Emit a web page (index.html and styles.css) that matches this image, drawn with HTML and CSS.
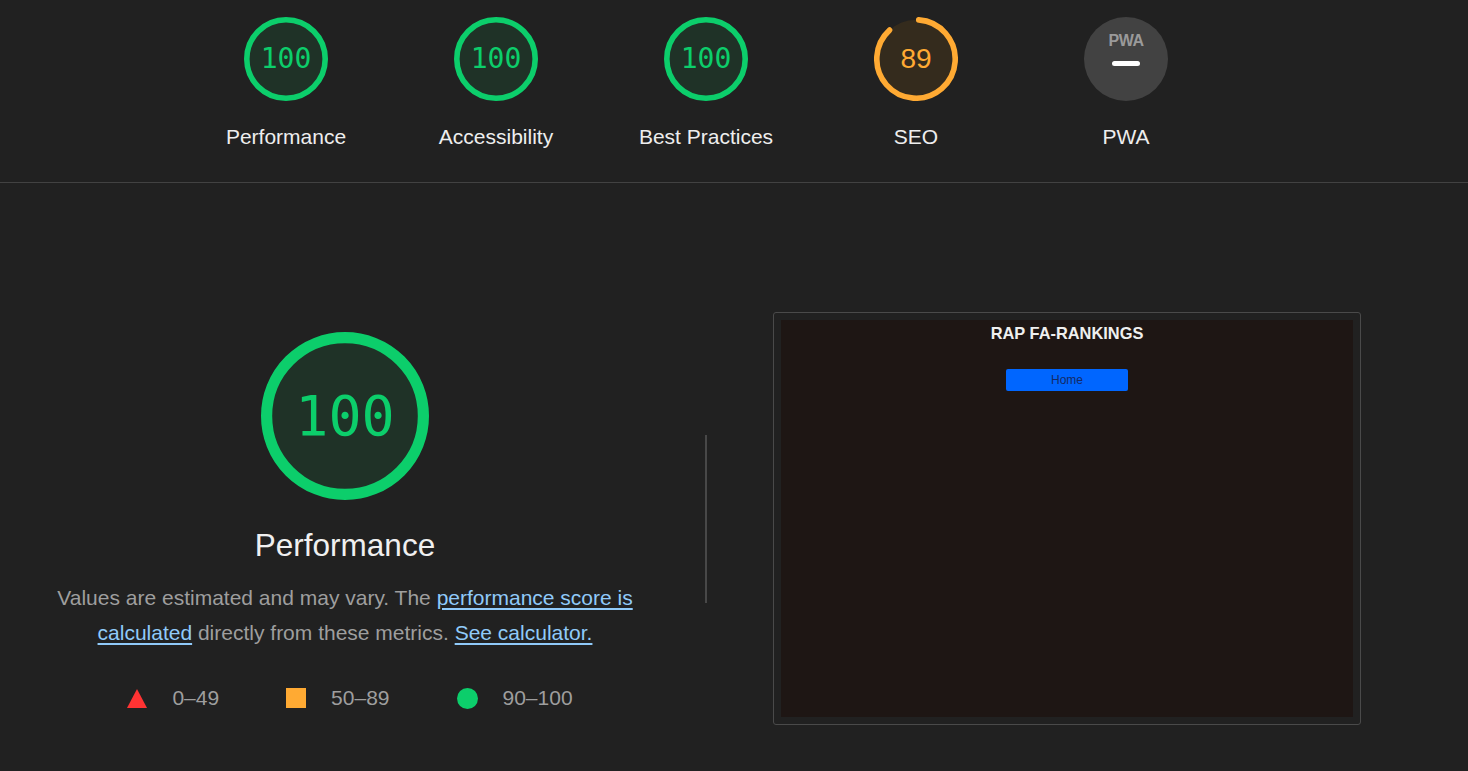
FILE: index.html
```html
<!DOCTYPE html>
<html lang="en">
<head>
<meta charset="utf-8">
<title>Lighthouse Report</title>
<link rel="stylesheet" href="styles.css">
</head>
<body>
<header class="scores-bar">
  <div class="scores">
    <div class="gauge-item">
      <div class="gauge small pass">
        <svg viewBox="0 0 120 120"><circle class="base" cx="60" cy="60" r="56"/><circle class="arc" cx="60" cy="60" r="56" stroke-dasharray="351.86 351.86" transform="rotate(-90 60 60)"/></svg>
        <span class="pct">100</span>
      </div>
      <div class="label">Performance</div>
    </div>
    <div class="gauge-item">
      <div class="gauge small pass">
        <svg viewBox="0 0 120 120"><circle class="base" cx="60" cy="60" r="56"/><circle class="arc" cx="60" cy="60" r="56" stroke-dasharray="351.86 351.86" transform="rotate(-90 60 60)"/></svg>
        <span class="pct">100</span>
      </div>
      <div class="label">Accessibility</div>
    </div>
    <div class="gauge-item">
      <div class="gauge small pass">
        <svg viewBox="0 0 120 120"><circle class="base" cx="60" cy="60" r="56"/><circle class="arc" cx="60" cy="60" r="56" stroke-dasharray="351.86 351.86" transform="rotate(-90 60 60)"/></svg>
        <span class="pct">100</span>
      </div>
      <div class="label">Best Practices</div>
    </div>
    <div class="gauge-item">
      <div class="gauge small average">
        <svg viewBox="0 0 120 120"><circle class="base" cx="60" cy="60" r="56"/><circle class="arc" cx="60" cy="60" r="56" stroke-dasharray="306 351.86" transform="rotate(-86 60 60)"/></svg>
        <span class="pct">89</span>
      </div>
      <div class="label">SEO</div>
    </div>
    <div class="gauge-item">
      <div class="gauge small pwa">
        <span class="pwa-logo">PWA</span>
        <span class="pwa-dash"></span>
      </div>
      <div class="label">PWA</div>
    </div>
  </div>
</header>

<section class="perf">
  <div class="perf-left">
    <div class="gauge big pass">
      <svg viewBox="0 0 120 120"><circle class="base" cx="60" cy="60" r="56"/><circle class="arc" cx="60" cy="60" r="56" stroke-dasharray="351.86 351.86" transform="rotate(-90 60 60)"/></svg>
      <span class="pct">100</span>
    </div>
    <div class="big-label">Performance</div>
    <p class="desc">Values are estimated and may vary. The <a href="#">performance score is calculated</a> directly from these metrics. <a href="#">See calculator.</a></p>
    <div class="legend">
      <span class="legend-item"><span class="ico tri"></span>0–49</span>
      <span class="legend-item"><span class="ico sq"></span>50–89</span>
      <span class="legend-item"><span class="ico dot"></span>90–100</span>
    </div>
  </div>
  <div class="vdivider"></div>
  <div class="perf-right">
    <div class="shot">
      <div class="shot-inner">
        <div class="shot-title">RAP FA-RANKINGS</div>
        <div class="shot-btn">Home</div>
      </div>
    </div>
  </div>
</section>
</body>
</html>
```

FILE: styles.css
```css
html, body {
  margin: 0;
  padding: 0;
  background: #212121;
}
body {
  font-family: "Liberation Sans", Arial, sans-serif;
  color: #eeeeee;
  min-height: 771px;
}

/* header gauges */
.scores-bar {
  height: 182px;
  border-bottom: 1px solid #424242;
}
.scores {
  width: 1412px;
  display: flex;
  justify-content: center;
}
.gauge-item {
  width: 210px;
  display: flex;
  flex-direction: column;
  align-items: center;
  padding-top: 17px;
}
.gauge {
  position: relative;
  display: flex;
  align-items: center;
  justify-content: center;
}
.gauge svg {
  position: absolute;
  inset: 0;
  width: 100%;
  height: 100%;
}
.gauge .base { stroke: none; }
.gauge .arc { fill: none; stroke-width: 8; stroke-linecap: round; }
.gauge.pass .base { fill: #1f3227; }
.gauge.pass .arc { stroke: #0cce6b; stroke-linecap: butt; }
.gauge.pass .pct { color: #0cce6b; }
.gauge.average .base { fill: #342b1d; }
.gauge.average .arc { stroke: #ffaa33; }
.gauge.average .pct { color: #ffaa33; }

.gauge.small { width: 84px; height: 84px; }
.gauge.small .pct {
  position: relative;
  font-family: "DejaVu Sans Mono", "Liberation Mono", monospace;
  font-size: 28px;
  line-height: 1;
}
.gauge.average .pct { font-family: "Liberation Sans", Arial, sans-serif; font-size: 28px; }
.gauge.pwa {
  background: #424242;
  border-radius: 50%;
  flex-direction: column;
  justify-content: flex-start;
}
.pwa-logo {
  margin-top: 15px;
  font-weight: bold;
  font-size: 16px;
  line-height: 17px;
  color: #9a9a9a;
  letter-spacing: -0.5px;
}
.pwa-dash {
  margin-top: 12px;
  width: 28px;
  height: 5px;
  border-radius: 3px;
  background: #ffffff;
}
.label {
  margin-top: 24px;
  font-size: 21px;
  line-height: 24px;
  color: #eeeeee;
}

/* performance section */
.perf {
  width: 1412px;
  display: flex;
  align-items: flex-start;
  padding-top: 129px;
}
.perf-left {
  width: 690px;
  margin-top: 20px;
  display: flex;
  flex-direction: column;
  align-items: center;
}
.gauge.big { width: 168px; height: 168px; }
.gauge.big .pct {
  position: relative;
  font-family: "DejaVu Sans Mono", "Liberation Mono", monospace;
  font-size: 55px;
  line-height: 1;
}
.big-label {
  margin-top: 27px;
  font-size: 31.5px;
  line-height: 36px;
  color: #f0f0f0;
}
.desc {
  margin: 17px 0 0;
  max-width: 620px;
  text-align: center;
  font-size: 21px;
  line-height: 35px;
  color: #9e9e9e;
}
.desc a {
  color: #90caf9;
  text-decoration: underline;
  text-underline-offset: 3px;
}
.legend {
  margin-top: 36px;
  margin-left: 10px;
  display: flex;
  gap: 67px;
  font-size: 21px;
  line-height: 24px;
  color: #9e9e9e;
}
.legend-item {
  display: flex;
  align-items: center;
  gap: 25px;
}
.ico { display: inline-block; }
.ico.tri {
  width: 0;
  height: 0;
  border-left: 10.5px solid transparent;
  border-right: 10.5px solid transparent;
  border-bottom: 19px solid #ff3333;
}
.ico.sq { width: 20px; height: 20px; background: #ffaa33; }
.ico.dot { width: 21px; height: 21px; border-radius: 50%; background: #0cce6b; }

.vdivider {
  align-self: center;
  width: 2px;
  height: 168px;
  margin: 0 15px;
  background: #484848;
}
.perf-right {
  width: 690px;
  display: flex;
  justify-content: center;
}
.shot {
  width: 572px;
  height: 397px;
  padding: 7px;
  border: 1px solid #4a4a4a;
  border-radius: 3px;
}
.shot-inner {
  width: 100%;
  height: 100%;
  background: #1e1614;
  display: flex;
  flex-direction: column;
  align-items: center;
}
.shot-title {
  margin-top: 3px;
  font-weight: bold;
  font-size: 16.4px;
  line-height: 20px;
  color: #efefef;
}
.shot-btn {
  margin-top: 26px;
  width: 122px;
  height: 22px;
  border-radius: 2px;
  background: #0066ff;
  color: #142a66;
  font-size: 12px;
  line-height: 22px;
  text-align: center;
}
```
